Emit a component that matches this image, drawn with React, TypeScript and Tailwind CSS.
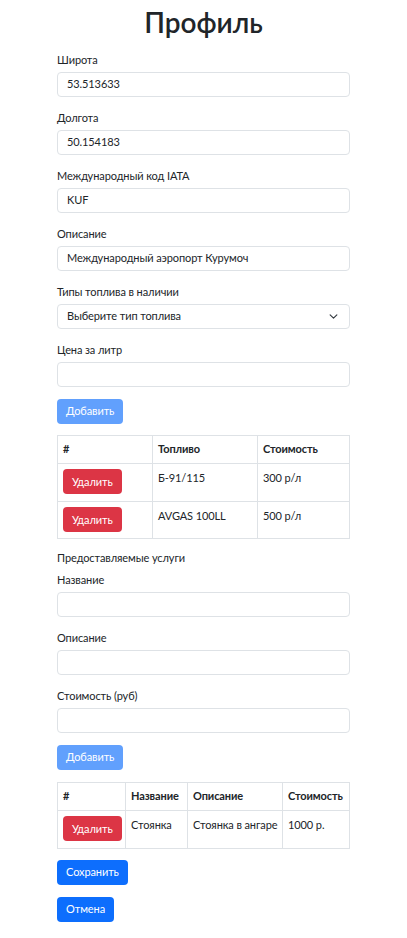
const font = { fontFamily: 'Lato, "Noto Sans", sans-serif' }

function Field({ label, value }: { label: string; value?: string }) {
  return (
    <div className="mb-3">
      <label className="block text-[11px] tracking-[-0.1px] leading-[18px] mb-[3px] text-[#212529]">{label}</label>
      <div className="h-[25px] rounded-[4px] border border-[#dee2e6] px-[9px] flex items-center text-[11px] tracking-[-0.1px] text-[#212529]">
        {value}
      </div>
    </div>
  )
}

function DeleteButton() {
  return (
    <button className="block h-[25px] px-[9px] rounded-[4px] bg-[#dc3545] text-white text-[11px] tracking-[-0.1px]">Удалить</button>
  )
}

const cell = 'border border-[#dee2e6] px-[5px] py-[5px] align-top leading-[18px]'
const head = 'border border-[#dee2e6] text-left font-bold px-[5px]'

export default function App() {
  return (
    <div className="bg-white min-h-[938px] text-[#212529]" style={font}>
      <div className="w-[293px] pt-[2px] ml-[57px]">
        <h1 className="text-[28px] leading-[40px] font-semibold text-center mb-[9px]">Профиль</h1>

        <Field label="Широта" value="53.513633" />
        <Field label="Долгота" value="50.154183" />
        <Field label="Международный код IATA" value="KUF" />
        <Field label="Описание" value="Международный аэропорт Курумоч" />

        <div className="mb-3">
          <label className="block text-[11px] tracking-[-0.1px] leading-[18px] mb-[3px]">Типы топлива в наличии</label>
          <div className="h-[25px] rounded-[4px] border border-[#dee2e6] pl-[9px] pr-[11px] flex items-center justify-between text-[11px] tracking-[-0.1px]">
            <span>Выберите тип топлива</span>
            <svg width="9" height="9" viewBox="0 0 16 16" fill="none" stroke="#343a40" strokeWidth="2" strokeLinecap="round" strokeLinejoin="round">
              <path d="m2 5 6 6 6-6" />
            </svg>
          </div>
        </div>

        <Field label="Цена за литр" />

        <button className="block h-[25px] px-[9px] rounded-[4px] bg-[#0d6efd] opacity-65 text-white text-[11px] tracking-[-0.1px] mb-[11px]">Добавить</button>

        <table className="w-full table-fixed border-collapse text-[11px] tracking-[-0.1px] mb-[10px]">
          <thead>
            <tr className="h-[28px]">
              <th className={`${head} w-[95px]`}>#</th>
              <th className={`${head} w-[105px]`}>Топливо</th>
              <th className={head}>Стоимость</th>
            </tr>
          </thead>
          <tbody>
            {[
              ['Б-91/115', '300 р/л', 'h-[38px]'],
              ['AVGAS 100LL', '500 р/л', 'h-[37px]'],
            ].map(([fuel, price, h]) => (
              <tr key={fuel} className={h}>
                <td className={cell}><DeleteButton /></td>
                <td className={cell}>{fuel}</td>
                <td className={cell}>{price}</td>
              </tr>
            ))}
          </tbody>
        </table>

        <div className="text-[11px] tracking-[-0.1px] leading-[18px] mb-[4px]">Предоставляемые услуги</div>

        <Field label="Название" />
        <Field label="Описание" />
        <Field label="Стоимость (руб)" />

        <button className="block h-[25px] px-[9px] rounded-[4px] bg-[#0d6efd] opacity-65 text-white text-[11px] tracking-[-0.1px] mb-[12px]">Добавить</button>

        <table className="w-full table-fixed border-collapse text-[11px] tracking-[-0.1px] mb-[11px] whitespace-nowrap">
          <thead>
            <tr className="h-[28px]">
              <th className={`${head} w-[68px]`}>#</th>
              <th className={`${head} w-[62px]`}>Название</th>
              <th className={`${head} w-[95px]`}>Описание</th>
              <th className={head}>Стоимость</th>
            </tr>
          </thead>
          <tbody>
            <tr className="h-[38px]">
              <td className={cell}><DeleteButton /></td>
              <td className={cell}>Стоянка</td>
              <td className={cell}>Стоянка в ангаре</td>
              <td className={cell}>1000 р.</td>
            </tr>
          </tbody>
        </table>

        <button className="block h-[25px] px-[9px] rounded-[4px] bg-[#0d6efd] text-white text-[11px] tracking-[-0.1px] mb-[12px]">Сохранить</button>
        <button className="block h-[25px] px-[9px] rounded-[4px] bg-[#0d6efd] text-white text-[11px] tracking-[-0.1px]">Отмена</button>
      </div>
    </div>
  )
}
